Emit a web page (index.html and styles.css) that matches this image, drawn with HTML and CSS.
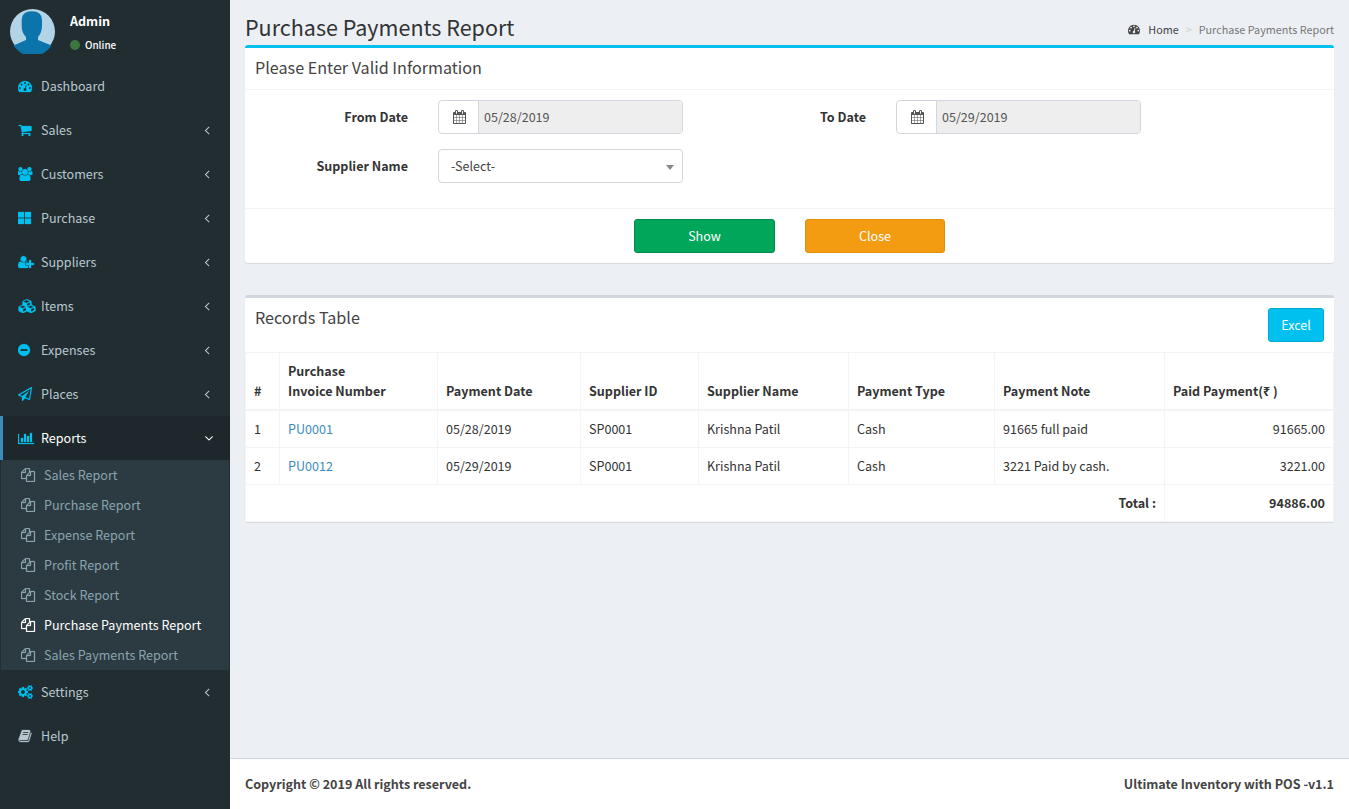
FILE: index.html
```html
<!DOCTYPE html>
<html lang="en">
<head>
<meta charset="utf-8">
<title>Purchase Payments Report</title>
<link rel="stylesheet" href="styles.css">
</head>
<body>
<svg class="defs" aria-hidden="true">
<symbol id="i-dashboard" viewBox="0 0 1792 1792" preserveAspectRatio="xMinYMid meet"><path d="M384 1152q0-53-37.5-90.5t-90.5-37.5-90.5 37.5-37.5 90.5 37.5 90.5 90.5 37.5 90.5-37.5 37.5-90.5zm192-448q0-53-37.5-90.5t-90.5-37.5-90.5 37.5-37.5 90.5 37.5 90.5 90.5 37.5 90.5-37.5 37.5-90.5zm428 481l101-382q6-26-7.5-48.5t-38.5-29.5-48 6.5-30 39.5l-101 382q-60 5-107 43.5t-63 98.5q-20 77 20 146t117 89 146-20 89-117q16-60-6-117t-72-91zm660-33q0-53-37.5-90.5t-90.5-37.5-90.5 37.5-37.5 90.5 37.5 90.5 90.5 37.5 90.5-37.5 37.5-90.5zm-640-640q0-53-37.5-90.5t-90.5-37.5-90.5 37.5-37.5 90.5 37.5 90.5 90.5 37.5 90.5-37.5 37.5-90.5zm448 192q0-53-37.5-90.5t-90.5-37.5-90.5 37.5-37.5 90.5 37.5 90.5 90.5 37.5 90.5-37.5 37.5-90.5zm320 448q0 261-141 483-19 29-54 29h-1402q-35 0-54-29-141-221-141-483 0-182 71-348t191-286 286-191 348-71 348 71 286 191 191 286 71 348z"/></symbol>
<symbol id="i-cart" viewBox="0 0 1792 1792" preserveAspectRatio="xMinYMid meet"><path d="M704 1536q0 52-38 90t-90 38-90-38-38-90 38-90 90-38 90 38 38 90zm896 0q0 52-38 90t-90 38-90-38-38-90 38-90 90-38 90 38 38 90zm128-1088v512q0 24-16.5 42.5t-40.5 21.5l-1044 122q13 60 13 70 0 16-24 64h920q26 0 45 19t19 45-19 45-45 19h-1024q-26 0-45-19t-19-45q0-11 8-31.5t16-36 21.5-40 15.5-29.5l-177-823h-204q-26 0-45-19t-19-45 19-45 45-19h256q16 0 28.5 6.5t19.5 15.5 13 24.5 8 26 5.5 29.5 4.5 26h1201q26 0 45 19t19 45z"/></symbol>
<symbol id="i-users" viewBox="0 0 1920 1792" preserveAspectRatio="xMinYMid meet"><path d="M529 896q-162 5-265 128h-134q-82 0-138-40.5t-56-118.5q0-353 124-353 6 0 43.5 21t97.5 42.5 119 21.5q67 0 133-23-5 37-5 66 0 139 81 256zm1071 637q0 120-73 189.5t-194 69.5h-874q-121 0-194-69.5t-73-189.5q0-53 3.5-103.5t14-109 26.5-108.5 43-97.5 62-81 85.5-53.5 111.5-20q10 0 43 21.5t73 48 107 48 135 21.5 135-21.5 107-48 73-48 43-21.5q61 0 111.5 20t85.5 53.5 62 81 43 97.5 26.5 108.5 14 109 3.5 103.5zm-1024-1277q0 106-75 181t-181 75-181-75-75-181 75-181 181-75 181 75 75 181zm704 384q0 159-112.5 271.5t-271.5 112.5-271.5-112.5-112.5-271.5 112.5-271.5 271.5-112.5 271.5 112.5 112.5 271.5zm576 225q0 78-56 118.5t-138 40.5h-134q-103-123-265-128 81-117 81-256 0-29-5-66 66 23 133 23 59 0 119-21.5t97.5-42.5 43.5-21q124 0 124 353zm-128-609q0 106-75 181t-181 75-181-75-75-181 75-181 181-75 181 75 75 181z"/></symbol>
<symbol id="i-th" viewBox="0 0 1792 1792" preserveAspectRatio="xMinYMid meet"><path d="M0 128h768v704h-768zm896 0h768v704h-768zm-896 832h768v704h-768zm896 0h768v704h-768z"/></symbol>
<symbol id="i-userplus" viewBox="0 0 2048 1792" preserveAspectRatio="xMinYMid meet"><path d="M704 896q-159 0-271.5-112.5t-112.5-271.5 112.5-271.5 271.5-112.5 271.5 112.5 112.5 271.5-112.5 271.5-271.5 112.5zm960 128h352q13 0 22.5 9.5t9.5 22.5v192q0 13-9.5 22.5t-22.5 9.5h-352v352q0 13-9.5 22.5t-22.5 9.5h-192q-13 0-22.5-9.5t-9.5-22.5v-352h-352q-13 0-22.5-9.5t-9.5-22.5v-192q0-13 9.5-22.5t22.5-9.5h352v-352q0-13 9.5-22.5t22.5-9.5h192q13 0 22.5 9.5t9.5 22.5v352zm-736 224q0 52 38 90t90 38h256v238q-68 50-171 50h-874q-121 0-194-70.5t-73-189.5q0-53 3.5-103.5t14-109 26.5-108.5 43-97.5 62-81 85.5-53.5 111.5-20q19 0 39 17 79 61 154.5 91.5t164.5 30.5 164.5-30.5 154.5-91.5q20-17 39-17 132 0 217 96h-223q-52 0-90 38t-38 90v192z"/></symbol>
<symbol id="i-cubes" viewBox="0 0 2304 1792" preserveAspectRatio="xMinYMid meet"><path d="M640 1632l384-192v-314l-384 164v342zm-64-454l404-173-404-173-404 173zm1088 454l384-192v-314l-384 164v342zm-64-454l404-173-404-173-404 173zm-448-293l384-165v-266l-384 164v267zm-64-379l441-189-441-189-441 189zm1152 547v416q0 36-19 67t-52 47l-448 224q-25 14-57 14t-57-14l-448-224q-4-2-7-4-2 2-7 4l-448 224q-25 14-57 14t-57-14l-448-224q-33-16-52-47t-19-67v-416q0-38 21.5-70t56.5-48l434-186v-400q0-38 21.5-70t56.5-48l448-192q23-10 50-10t50 10l448 192q35 16 56.5 48t21.5 70v400l434 186q36 16 57 48t21 70z"/></symbol>
<symbol id="i-minus" viewBox="0 0 1792 1792" preserveAspectRatio="xMinYMid meet"><path d="M1216 960v-128q0-26-19-45t-45-19h-768q-26 0-45 19t-19 45v128q0 26 19 45t45 19h768q26 0 45-19t19-45zm320-64q0 209-103 385.5t-279.5 279.5-385.5 103-385.5-103-279.5-279.5-103-385.5 103-385.5 279.5-279.5 385.5-103 385.5 103 279.5 279.5 103 385.5z"/></symbol>
<symbol id="i-plane" viewBox="0 0 1792 1792" preserveAspectRatio="xMinYMid meet"><path d="M1764 11q33 24 27 64l-256 1536q-5 29-32 45-14 8-31 8-11 0-24-5l-527-215-298 327q-18 21-47 21-14 0-23-4-19-7-30-23.5t-11-36.5v-452l-472-193q-37-14-40-55-3-39 32-59l1664-960q35-21 68 2zm-342 1499l221-1323-1434 827 336 137 863-639-478 797z"/></symbol>
<symbol id="i-bars" viewBox="0 0 2048 1792" preserveAspectRatio="xMinYMid meet"><path d="M640 896v512h-256v-512h256zm384-512v1024h-256v-1024h256zm1024 1152v128h-2048v-1280h128v1152h1920zm-640-896v768h-256v-768h256zm384-384v1152h-256v-1152h256z"/></symbol>
<symbol id="i-files" viewBox="0 0 1792 1792" preserveAspectRatio="xMinYMid meet"><path d="M1696 384q40 0 68 28t28 68v1216q0 40-28 68t-68 28h-960q-40 0-68-28t-28-68v-288h-544q-40 0-68-28t-28-68v-672q0-40 20-88t48-76l408-408q28-28 76-48t88-20h416q40 0 68 28t28 68v328q68-40 128-40h416zm-544 213l-299 299h299v-299zm-640-384l-299 299h299v-299zm196 647l316-316v-416h-384v416q0 40-28 68t-68 28h-416v640h512v-256q0-40 20-88t48-76zm956 804v-1152h-384v416q0 40-28 68t-68 28h-416v640h896z"/></symbol>
<symbol id="i-cogs" viewBox="0 0 1920 1792" preserveAspectRatio="xMinYMid meet"><path d="M896 896q0-106-75-181t-181-75-181 75-75 181 75 181 181 75 181-75 75-181zm768 512q0-52-38-90t-90-38-90 38-38 90q0 53 37.5 90.5t90.5 37.5 90.5-37.5 37.5-90.5zm0-1024q0-52-38-90t-90-38-90 38-38 90q0 53 37.5 90.5t90.5 37.5 90.5-37.5 37.5-90.5zm-384 421v185q0 10-7 19.5t-16 10.5l-155 24q-11 35-32 76 34 48 90 115 7 11 7 20 0 12-7 19-23 30-82.5 89.5t-78.5 59.5q-11 0-21-7l-115-90q-37 19-77 31-11 108-23 155-7 24-30 24h-186q-11 0-20-7.5t-10-17.5l-23-153q-34-10-75-31l-118 89q-7 7-20 7-11 0-21-8-144-133-144-160 0-9 7-19 10-14 41-53t47-61q-23-44-35-82l-152-24q-10-1-17-9.5t-7-19.5v-185q0-10 7-19.5t16-10.5l155-24q11-35 32-76-34-48-90-115-7-11-7-20 0-12 7-20 22-30 82-89t79-59q11 0 21 7l115 90q34-18 77-32 11-108 23-154 7-24 30-24h186q11 0 20 7.5t10 17.5l23 153q34 10 75 31l118-89q8-7 20-7 11 0 21 8 144 133 144 160 0 8-7 19-12 16-42 54t-45 60q23 48 34 82l152 23q10 2 17 10.5t7 19.5zm640 533v140q0 16-149 31-12 27-30 52 51 113 51 138 0 4-4 7-122 71-124 71-8 0-46-47t-52-68q-20 2-30 2t-30-2q-14 21-52 68t-46 47q-2 0-124-71-4-3-4-7 0-25 51-138-18-25-30-52-149-15-149-31v-140q0-16 149-31 13-29 30-52-51-113-51-138 0-4 4-7 4-2 35-20t59-34 30-16q8 0 46 46.5t52 67.5q20-2 30-2t30 2q51-71 92-112l6-2q4 0 124 70 4 3 4 7 0 25-51 138 17 23 30 52 149 15 149 31zm0-1024v140q0 16-149 31-12 27-30 52 51 113 51 138 0 4-4 7-122 71-124 71-8 0-46-47t-52-68q-20 2-30 2t-30-2q-14 21-52 68t-46 47q-2 0-124-71-4-3-4-7 0-25 51-138-18-25-30-52-149-15-149-31v-140q0-16 149-31 13-29 30-52-51-113-51-138 0-4 4-7 4-2 35-20t59-34 30-16q8 0 46 46.5t52 67.5q20-2 30-2t30 2q51-71 92-112l6-2q4 0 124 70 4 3 4 7 0 25-51 138 17 23 30 52 149 15 149 31z"/></symbol>
<symbol id="i-book" viewBox="0 0 1792 1792" preserveAspectRatio="xMinYMid meet"><path d="M1703 478q40 57 18 129l-275 906q-19 64-76.5 107.5t-122.5 43.5h-923q-77 0-148.5-53.5t-99.5-131.5q-24-67-2-127 0-4 3-27t4-37q1-8-3-21.5t-3-19.5q2-11 8-21t16.5-23.5 16.5-23.5q23-38 45-91.5t30-91.5q3-10 .5-30t-.5-28q3-11 17-28t17-23q21-36 42-92t25-90q1-9-2.5-32t.5-28q4-13 22-30.5t22-22.5q19-26 42.5-84.5t27.5-96.5q1-8-3-25.5t-2-26.5q2-8 9-18t18-23 17-21q8-12 16.5-30.5t15-35 16-36 19.5-32 26.5-23.5 36-11.5 47.5 5.5l-1 3q38-9 51-9h761q74 0 114 56t18 130l-274 906q-36 119-71.5 153.5t-128.5 34.5h-869q-27 0-38 15-11 16-1 43 24 70 144 70h923q29 0 56-15.5t35-41.5l300-987q7-22 5-57 38 15 59 43zm-1064 2q-4 13 2 22.5t20 9.5h608q13 0 25.5-9.5t16.5-22.5l21-64q4-13-2-22.5t-20-9.5h-608q-13 0-25.5 9.5t-16.5 22.5zm-83 256q-4 13 2 22.5t20 9.5h608q13 0 25.5-9.5t16.5-22.5l21-64q4-13-2-22.5t-20-9.5h-608q-13 0-25.5 9.5t-16.5 22.5z"/></symbol>
<symbol id="i-calendar" viewBox="0 0 1664 1792" preserveAspectRatio="xMidYMid meet"><path d="M192 1664h288v-288h-288v288zm352 0h320v-288h-320v288zm-352-352h288v-320h-288v320zm352 0h320v-320h-320v320zm-352-384h288v-288h-288v288zm736 736h320v-288h-320v288zm-384-736h320v-288h-320v288zm768 736h288v-288h-288v288zm-384-352h320v-320h-320v320zm-352-864v-288q0-13-9.5-22.5t-22.5-9.5h-64q-13 0-22.5 9.5t-9.5 22.5v288q0 13 9.5 22.5t22.5 9.5h64q13 0 22.5-9.5t9.5-22.5zm736 864h288v-320h-288v320zm-384-384h320v-288h-320v288zm384 0h288v-288h-288v288zm32-480v-288q0-13-9.5-22.5t-22.5-9.5h-64q-13 0-22.5 9.5t-9.5 22.5v288q0 13 9.5 22.5t22.5 9.5h64q13 0 22.5-9.5t9.5-22.5zm384-64v1280q0 52-38 90t-90 38h-1408q-52 0-90-38t-38-90v-1280q0-52 38-90t90-38h128v-96q0-66 47-113t113-47h64q66 0 113 47t47 113v96h384v-96q0-66 47-113t113-47h64q66 0 113 47t47 113v96h128q52 0 90 38t38 90z"/></symbol>
<symbol id="i-left" viewBox="0 0 1792 1792"><path d="M1203 544q0 13-10 23l-393 393 393 393q10 10 10 23t-10 23l-50 50q-10 10-23 10t-23-10l-466-466q-10-10-10-23t10-23l466-466q10-10 23-10t23 10l50 50q10 10 10 23z"/></symbol>
<symbol id="i-down" viewBox="0 0 1792 1792"><path d="M1395 736q0 13-10 23l-466 466q-10 10-23 10t-23-10l-466-466q-10-10-10-23t10-23l50-50q10-10 23-10t23 10l393 393 393-393q10-10 23-10t23 10l50 50q10 10 10 23z"/></symbol>
</svg>

<aside class="sidebar">
  <div class="user-panel">
    <svg class="avatar" viewBox="0 0 45 45"><circle cx="22.5" cy="22.5" r="22.5" fill="#b2d4e6"/><path fill="#0a74ab" d="M21.700 2.300 Q32 2.300 32 11 L32 18 Q31.500 24 28 28 L28 31 L41.500 36.500 A22.500 22.500 0 0 1 3.500 36.500 L16 31 L16 28 Q12 24 11.700 18 L11.700 11 Q11.700 2.300 21.700 2.300 Z"/></svg>
    <div class="user-info">
      <p class="user-name">Admin</p>
      <p class="user-status"><span class="dot"></span>Online</p>
    </div>
  </div>
  <nav>
    <a class="nav-item"><svg class="ic"><use href="#i-dashboard"/></svg><span>Dashboard</span></a>
    <a class="nav-item"><svg class="ic"><use href="#i-cart"/></svg><span>Sales</span><svg class="caret"><use href="#i-left"/></svg></a>
    <a class="nav-item"><svg class="ic"><use href="#i-users"/></svg><span>Customers</span><svg class="caret"><use href="#i-left"/></svg></a>
    <a class="nav-item"><svg class="ic"><use href="#i-th"/></svg><span>Purchase</span><svg class="caret"><use href="#i-left"/></svg></a>
    <a class="nav-item"><svg class="ic"><use href="#i-userplus"/></svg><span>Suppliers</span><svg class="caret"><use href="#i-left"/></svg></a>
    <a class="nav-item"><svg class="ic"><use href="#i-cubes"/></svg><span>Items</span><svg class="caret"><use href="#i-left"/></svg></a>
    <a class="nav-item"><svg class="ic"><use href="#i-minus"/></svg><span>Expenses</span><svg class="caret"><use href="#i-left"/></svg></a>
    <a class="nav-item"><svg class="ic"><use href="#i-plane"/></svg><span>Places</span><svg class="caret"><use href="#i-left"/></svg></a>
    <a class="nav-item active"><svg class="ic"><use href="#i-bars"/></svg><span>Reports</span><svg class="caret"><use href="#i-down"/></svg></a>
    <div class="sub">
      <a class="sub-item"><svg class="ic"><use href="#i-files"/></svg><span>Sales Report</span></a>
      <a class="sub-item"><svg class="ic"><use href="#i-files"/></svg><span>Purchase Report</span></a>
      <a class="sub-item"><svg class="ic"><use href="#i-files"/></svg><span>Expense Report</span></a>
      <a class="sub-item"><svg class="ic"><use href="#i-files"/></svg><span>Profit Report</span></a>
      <a class="sub-item"><svg class="ic"><use href="#i-files"/></svg><span>Stock Report</span></a>
      <a class="sub-item current"><svg class="ic"><use href="#i-files"/></svg><span>Purchase Payments Report</span></a>
      <a class="sub-item"><svg class="ic"><use href="#i-files"/></svg><span>Sales Payments Report</span></a>
    </div>
    <a class="nav-item"><svg class="ic"><use href="#i-cogs"/></svg><span>Settings</span><svg class="caret"><use href="#i-left"/></svg></a>
    <a class="nav-item plain"><svg class="ic"><use href="#i-book"/></svg><span>Help</span></a>
  </nav>
</aside>

<div class="main">
  <section class="content">
    <header class="page-head">
      <h1>Purchase Payments Report</h1>
      <ol class="crumbs">
        <li class="crumb-home"><svg class="ic-crumb"><use href="#i-dashboard"/></svg>Home</li>
        <li class="crumb-sep">&gt;</li>
        <li class="crumb-now">Purchase Payments Report</li>
      </ol>
    </header>

    <div class="box box-info">
      <div class="box-head"><h3>Please Enter Valid Information</h3></div>
      <div class="form-body">
        <label class="lbl">From Date</label>
        <div class="date-group"><span class="addon"><svg class="ic-cal"><use href="#i-calendar"/></svg></span><span class="date-val">05/28/2019</span></div>
        <label class="lbl">To Date</label>
        <div class="date-group"><span class="addon"><svg class="ic-cal"><use href="#i-calendar"/></svg></span><span class="date-val">05/29/2019</span></div>
        <label class="lbl">Supplier Name</label>
        <div class="select"><span>-Select-</span><i class="arrow"></i></div>
      </div>
      <div class="form-foot">
        <button class="btn btn-show">Show</button>
        <button class="btn btn-close">Close</button>
      </div>
    </div>

    <div class="box box-plain">
      <div class="box-head records-head"><h3>Records Table</h3><button class="btn btn-excel">Excel</button></div>
      <table class="records">
        <colgroup><col class="c1"><col class="c2"><col class="c3"><col class="c4"><col class="c5"><col class="c6"><col class="c7"><col class="c8"></colgroup>
        <thead>
          <tr><th>#</th><th>Purchase<br>Invoice Number</th><th>Payment Date</th><th>Supplier ID</th><th>Supplier Name</th><th>Payment Type</th><th>Payment Note</th><th>Paid Payment(₹ )</th></tr>
        </thead>
        <tbody>
          <tr><td>1</td><td><a class="lnk">PU0001</a></td><td>05/28/2019</td><td>SP0001</td><td>Krishna Patil</td><td>Cash</td><td>91665 full paid</td><td class="num">91665.00</td></tr>
          <tr><td>2</td><td><a class="lnk">PU0012</a></td><td>05/29/2019</td><td>SP0001</td><td>Krishna Patil</td><td>Cash</td><td>3221 Paid by cash.</td><td class="num">3221.00</td></tr>
          <tr><td colspan="7" class="num strong">Total :</td><td class="num strong">94886.00</td></tr>
        </tbody>
      </table>
    </div>
  </section>
  <footer class="foot"><span>Copyright © 2019 All rights reserved.</span><span>Ultimate Inventory with POS -v1.1</span></footer>
</div>
</body>
</html>
```
FILE: styles.css
```css
* { box-sizing: border-box; }
html, body { margin: 0; height: 100%; }
body {
  display: flex;
  height: 809px;
  overflow: hidden;
  font-family: "Noto Sans CJK SC", "Noto Sans", sans-serif;
  font-size: 12.55px;
  line-height: 20px;
  color: #333;
  background: #ecf0f5;
}
.defs { position: absolute; width: 0; height: 0; }
p, h1, h3, ol { margin: 0; padding: 0; }

/* Sidebar */
.sidebar { width: 230px; flex: none; background: #222d32; color: #b8c7ce; }
.user-panel { display: flex; height: 64px; padding: 9px 10px 0; }
.avatar { width: 45px; height: 45px; flex: none; }
.user-info { margin-left: 15px; }
.user-name { font-weight: 700; color: #fff; line-height: 20px; margin-top: 2px; }
.user-status { display: flex; align-items: center; font-size: 9.9px; font-weight: 500; color: #fff; line-height: 16px; margin-top: 6px; }
.dot { width: 10px; height: 10px; border-radius: 50%; background: #3c763d; margin-right: 5px; }
.nav-item { display: flex; align-items: center; height: 44px; padding-left: 18px; color: #b8c7ce; }
.nav-item .ic { color: #00c0ef; }
.nav-item.plain .ic { color: #b8c7ce; }
.ic { width: 20px; height: 14px; flex: none; margin-right: 3px; fill: currentColor; stroke: currentColor; stroke-width: 30; overflow: visible; }
.caret { width: 14px; height: 14px; margin-left: auto; margin-right: 16px; fill: currentColor; }
.nav-item.active { background: #1e282c; color: #fff; border-left: 3px solid #3c8dbc; padding-left: 15px; }
.nav-item.active .caret { margin-right: 14px; }
.sub { background: #2c3b41; margin: 0 1px; }
.sub-item { display: flex; align-items: center; height: 30px; padding-left: 20px; color: #8aa4af; }
.sub-item.current { color: #fff; }

/* Main */
.main { flex: 1; min-width: 0; display: flex; flex-direction: column; }
.content { flex: 1; padding: 0 15px; }
.page-head { display: flex; justify-content: space-between; height: 45px; padding-top: 13px; }
h1 { font-size: 21.5px; font-weight: 400; line-height: 28px; }
.crumbs { display: flex; align-items: center; list-style: none; font-size: 10.8px; line-height: 20px; margin-top: 6px; height: 20px; }
.crumb-home { display: flex; align-items: center; color: #444; }
.ic-crumb { width: 13px; height: 12px; margin-right: 7px; fill: currentColor; }
.crumb-sep { color: #ccc; padding: 0 7px; }
.crumb-now { color: #777; }

.box { background: #fff; border-top: 3px solid #d2d6de; border-radius: 3px; box-shadow: 0 1px 1px rgba(0,0,0,.1); }
.box-info { border-top-color: #00c0ef; margin-bottom: 32px; }
.box-head { padding: 10px; border-bottom: 1px solid #f4f4f4; }
.box-head h3 { font-size: 16.15px; font-weight: 400; line-height: 19px; margin-bottom: 2px; color: #444; }
.records-head { display: flex; justify-content: space-between; align-items: flex-start; border-bottom: 0; }

.form-body {
  display: grid;
  grid-template-columns: 163px 245px 153px 245px;
  column-gap: 30px;
  row-gap: 15px;
  padding: 10px 0 25px;
  border-bottom: 1px solid #f4f4f4;
}
.lbl { font-weight: 700; text-align: right; line-height: 34px; }
.date-group { display: flex; height: 34px; border: 1px solid #d2d6de; border-radius: 4px; }
.addon { width: 40px; flex: none; display: flex; align-items: center; justify-content: center; border-right: 1px solid #d2d6de; color: #555; }
.ic-cal { width: 14px; height: 14px; fill: currentColor; }
.date-val { flex: 1; background: #eee; color: #555; padding-left: 5px; line-height: 32px; border-radius: 0 3px 3px 0; }
.select { position: relative; height: 34px; border: 1px solid #d2d6de; border-radius: 4px; padding-left: 12px; line-height: 32px; color: #444; }
.arrow { position: absolute; right: 8px; top: 15px; border: 4px solid transparent; border-top: 5px solid #888; border-bottom: 0; }

.form-foot { display: flex; justify-content: center; gap: 30px; padding: 10px; }
.btn { height: 34px; padding: 0; font: inherit; color: #fff; border-radius: 3px; border: 1px solid; }
.btn-show { width: 141px; background: #00a65a; border-color: #008d4c; }
.btn-close { width: 140px; background: #f39c12; border-color: #e08e0b; }
.btn-excel { width: 56px; background: #00c0ef; border-color: #00acd6; }

/* Table */
.records { width: 1088px; table-layout: fixed; border-collapse: collapse; border: 1px solid #f4f4f4; }
.c1 { width: 34px; } .c2 { width: 158px; } .c3 { width: 143px; } .c4 { width: 118px; }
.c5 { width: 150px; } .c6 { width: 146px; } .c7 { width: 170px; } .c8 { width: 169px; }
.records th, .records td { padding: 8px; border: 1px solid #f4f4f4; text-align: left; line-height: 20px; }
.records th { vertical-align: bottom; border-bottom-width: 2px; font-weight: 700; }
.records td.num { text-align: right; }
.records td.strong { font-weight: 700; }
.lnk { color: #3c8dbc; }

.foot { display: flex; justify-content: space-between; height: 51px; align-items: center; padding: 0 15px; background: #fff; border-top: 1px solid #d2d6de; font-weight: 700; color: #444; }
```
